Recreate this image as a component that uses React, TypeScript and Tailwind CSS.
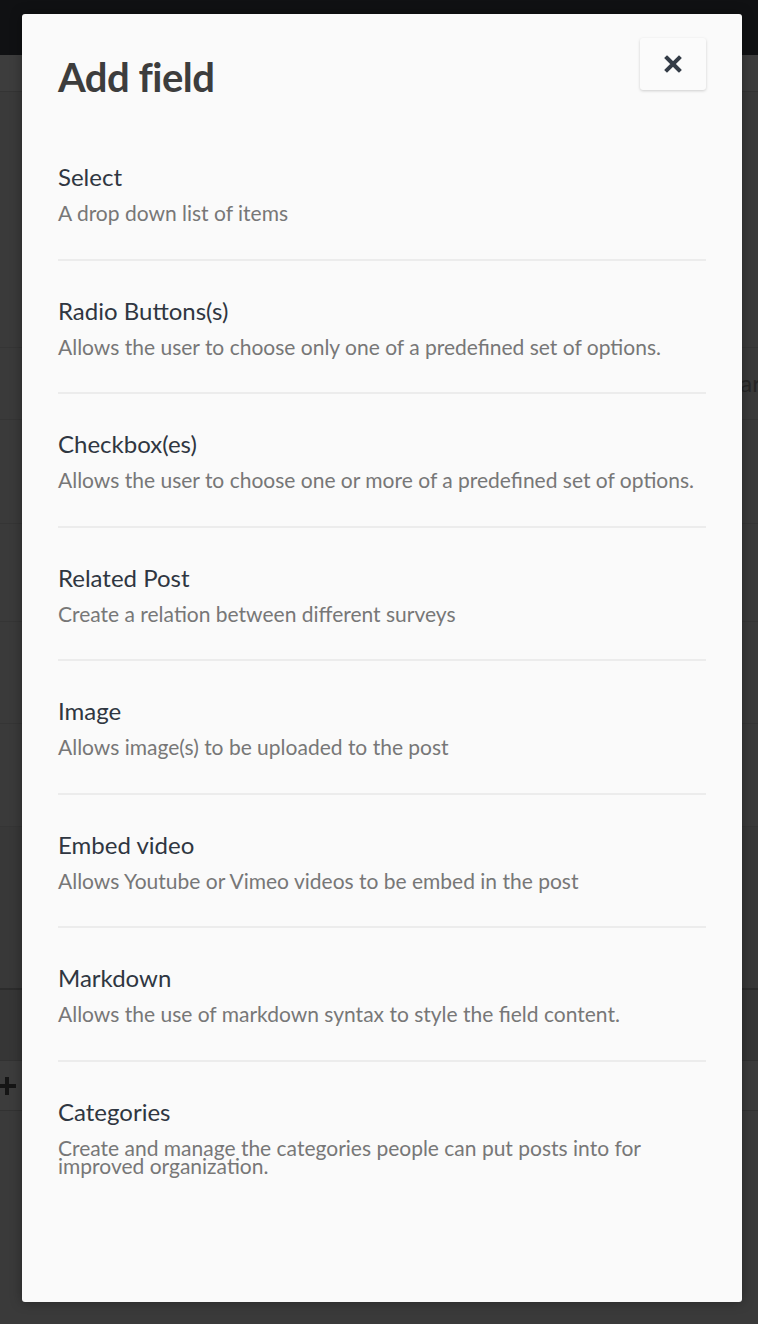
import React from "react";

const items = [
  { title: "Select", desc: "A drop down list of items" },
  { title: "Radio Buttons(s)", desc: "Allows the user to choose only one of a predefined set of options." },
  { title: "Checkbox(es)", desc: "Allows the user to choose one or more of a predefined set of options." },
  { title: "Related Post", desc: "Create a relation between different surveys" },
  { title: "Image", desc: "Allows image(s) to be uploaded to the post" },
  { title: "Embed video", desc: "Allows Youtube or Vimeo videos to be embed in the post" },
  { title: "Markdown", desc: "Allows the use of markdown syntax to style the field content." },
  {
    title: "Categories",
    desc: "Create and manage the categories people can put posts into for improved organization.",
  },
];

export default function App() {
  return (
    <div
      className="relative w-[758px] h-[1324px] overflow-hidden bg-[#3a3a3a]"
      style={{ fontFamily: "Lato, 'Open Sans', sans-serif" }}
    >
      {/* background page (dimmed) */}
      <div className="h-[55px] bg-[#101113]" />
      <div className="h-[37px] bg-[#3d3d3d] border-b border-[#343434]" />
      <div className="h-[256px] border-b border-[#353535]" />
      <div className="h-[72px] border-b border-[#353535] flex items-center justify-end">
        <span className="text-[24px] leading-none text-[#262626] mr-[-3px] mb-[2px]">ar</span>
      </div>
      <div className="h-[104px] border-b border-[#353535]" />
      <div className="h-[98px] border-b border-[#353535]" />
      <div className="h-[102px] border-b border-[#353535]" />
      <div className="h-[103px] border-b border-[#353535]" />
      <div className="h-[163px] border-b-2 border-[#2c2c2c] bg-[#383838]" />
      <div className="h-[70px] bg-[#363636]" />
      <div className="h-[51px] border-y border-[#323232] bg-[#3c3c3c] flex items-center">
        <svg width="20" height="20" viewBox="0 0 20 20" className="ml-[-3px]">
          <path d="M10 1 V19 M1 10 H19" stroke="#151515" strokeWidth="4" />
        </svg>
      </div>

      {/* modal */}
      <div className="absolute left-[22px] top-[14px] w-[720px] h-[1288px] rounded-[3px] bg-[#fafafa] shadow-[0_0_12px_rgba(0,0,0,0.35)] px-[36px] pt-[24px]">
        <div className="flex items-start justify-between h-[89px]">
          <h1 className="mt-[16px] text-[40px] leading-[46px] font-bold text-[#3d3d3d] tracking-[-0.5px]">
            Add field
          </h1>
          <button className="w-[66px] h-[52px] rounded-[3px] bg-[#fbfbfb] shadow-[0_1px_3px_rgba(0,0,0,0.18)] flex items-center justify-center">
            <svg width="18" height="18" viewBox="0 0 18 18">
              <path
                d="M3 3 L15 15 M15 3 L3 15"
                stroke="#343c47"
                strokeWidth="4"
                strokeLinecap="square"
              />
            </svg>
          </button>
        </div>
        <div className="flex flex-col">
          {items.map((it, i) => (
            <div
              key={it.title}
              className={
                i < items.length - 1
                  ? "pt-[36px] pb-[36.5px] border-b-2 border-[#ececec]"
                  : "pt-[36px]"
              }
            >
              <div className="text-[24px] leading-[28px] text-[#2f3641]">{it.title}</div>
              <div className="mt-[13px] text-[21px] leading-[18px] text-[#777777]">{it.desc}</div>
            </div>
          ))}
        </div>
      </div>
    </div>
  );
}
